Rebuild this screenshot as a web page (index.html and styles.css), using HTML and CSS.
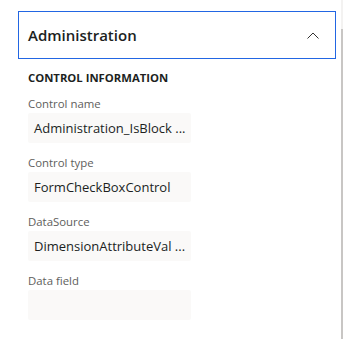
FILE: index.html
```html
<!DOCTYPE html>
<html lang="en">
<head>
    <meta charset="UTF-8">
    <meta name="viewport" content="width=device-width, initial-scale=1.0">
    <title>Control information</title>
    <link rel="stylesheet" href="styles.css">
</head>
<body>
    <div class="page">
        <div class="panel">
            <div class="section-header">
                <span class="section-title">Administration</span>
                <svg class="chevron" width="12" height="7" viewBox="0 0 12 7">
                    <path d="M0.5 6.5 L6 1 L11.5 6.5" fill="none" stroke="#323130" stroke-width="1"/>
                </svg>
            </div>
            <div class="section-body">
                <div class="group-title">CONTROL INFORMATION</div>
                <div class="field">
                    <div class="field-label">Control name</div>
                    <div class="field-value">Administration_IsBlock ...</div>
                </div>
                <div class="field">
                    <div class="field-label">Control type</div>
                    <div class="field-value">FormCheckBoxControl</div>
                </div>
                <div class="field">
                    <div class="field-label">DataSource</div>
                    <div class="field-value">DimensionAttributeVal ...</div>
                </div>
                <div class="field">
                    <div class="field-label">Data field</div>
                    <div class="field-value"></div>
                </div>
            </div>
        </div>
        <div class="scrollbar">
            <div class="scroll-thumb"></div>
        </div>
    </div>
</body>
</html>
```

FILE: styles.css
```css
body {
    font-family: "Open Sans", "Noto Sans", sans-serif;
    background-color: #ffffff;
    color: #201f1e;
    margin: 0;
    padding: 0;
}
.page {
    display: flex;
    height: 339px;
}
.panel {
    flex: 1;
    padding: 11px 0 0 18px;
}
.section-header {
    box-sizing: border-box;
    width: 318px;
    height: 48px;
    border: 1px solid #2266e3;
    display: flex;
    align-items: center;
    justify-content: space-between;
    padding: 0 16px 0 9px;
}
.section-title {
    font-size: 15px;
    font-weight: 600;
    line-height: 20px;
}
.chevron {
    display: block;
}
.section-body {
    padding: 11px 0 0 10px;
}
.group-title {
    font-size: 11.3px;
    font-weight: 700;
    line-height: 16px;
    margin-bottom: 8px;
}
.field {
    margin-bottom: 10px;
}
.field-label {
    font-size: 11.4px;
    color: #605e5c;
    line-height: 16px;
    padding-top: 2px;
    margin-bottom: 1px;
}
.field-value {
    width: 163px;
    height: 30px;
    box-sizing: border-box;
    background-color: #faf9f8;
    border-radius: 2px;
    padding: 0 6px;
    font-size: 13px;
    line-height: 30px;
    white-space: nowrap;
    overflow: hidden;
}
.scrollbar {
    width: 2px;
    margin-right: 1px;
    display: flex;
    flex-direction: column;
    background-color: #f3f2f1;
}
.scroll-thumb {
    margin-top: 29px;
    flex: 1;
    background-color: #c8c6c4;
}
```
